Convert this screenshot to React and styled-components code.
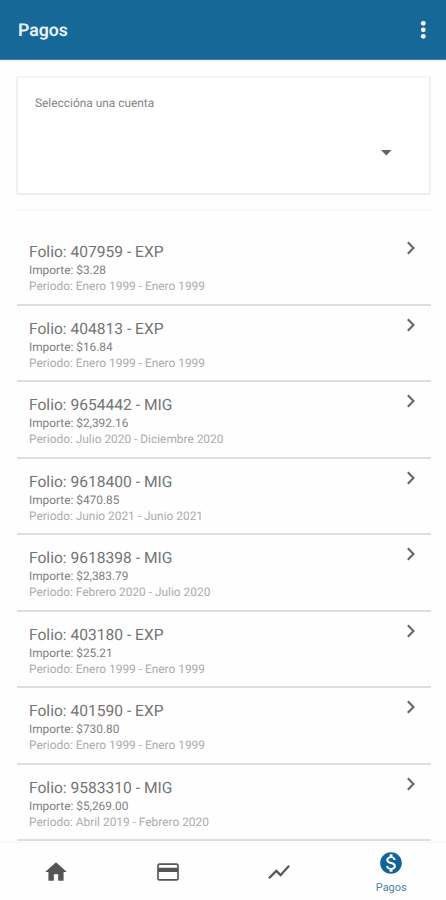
import React from "react";
import styled, { createGlobalStyle } from "styled-components";

const GlobalStyle = createGlobalStyle`
  *, *::before, *::after { box-sizing: border-box; }
  html, body { margin: 0; padding: 0; background: #fefefe; }
  body {
    font-family: Roboto, "Liberation Sans", sans-serif;
    text-rendering: geometricPrecision;
    overflow: hidden;
  }
`;

const Screen = styled.div`
  display: flex;
  flex-direction: column;
  width: 446px;
  height: 900px;
  overflow: hidden;
  background: #fefefe;
`;

const AppBar = styled.header`
  flex: none;
  display: flex;
  align-items: center;
  justify-content: space-between;
  height: 60px;
  padding: 1px 12px 0 18px;
  background: #166899;
  border-bottom: 1px solid #4c82a8;
  box-shadow: 0 1px 2px #dfe9f2;
`;

const Title = styled.h1`
  margin: 2px 0 0;
  font-size: 17.7px;
  line-height: 24px;
  font-weight: 600;
  color: #e6f3fb;
`;

const MenuButton = styled.button`
  display: flex;
  padding: 0;
  border: 0;
  background: none;
  color: #fff;
`;

const Content = styled.main`
  flex: 1;
  min-height: 0;
  overflow: hidden;
  padding: 16px 15px 0 16px;
`;

const AccountCard = styled.section`
  display: flex;
  flex-direction: column;
  height: 119px;
  padding: 16px 33px 0 17px;
  border: 2px solid #f1f1f1;
  border-top-color: #f6f6f6;
  border-bottom-color: #eeeeee;
  border-radius: 2px;
  background: #fff;
`;

const AccountLabel = styled.label`
  font-size: 11.9px;
  line-height: 18px;
  color: #848484;
`;

const SelectArrow = styled.span`
  align-self: flex-end;
  display: flex;
  margin-top: 38px;
  color: #626262;
`;

const List = styled.ul`
  list-style: none;
  margin: 15px 0 0 1px;
  padding: 18px 0 0;
  border-top: 1px solid #f5f5f5;
`;

const Row = styled.li`
  display: flex;
  justify-content: space-between;
  height: 76.55px;
  padding: 13px 14px 0 12px;
  border-bottom: 2px solid #dedede;
`;

const RowText = styled.div`
  display: flex;
  flex-direction: column;
  white-space: nowrap;
`;

const Folio = styled.span`
  font-size: 15.6px;
  line-height: 20px;
  color: #747474;
`;

const Amount = styled.span`
  font-size: 11.85px;
  line-height: 16px;
  color: #7e7e7e;
`;

const Period = styled.span`
  font-size: 11.9px;
  line-height: 16px;
  color: #acacac;
`;

const Chevron = styled.span`
  display: flex;
  align-self: flex-start;
  margin-top: -1px;
  color: #666;
`;

const BottomNav = styled.nav`
  flex: none;
  display: grid;
  grid-template-columns: repeat(4, 1fr);
  height: 58px;
  border-top: 1px solid #f6f6f6;
  background: #fefefe;
`;

const NavItem = styled.a`
  display: flex;
  flex-direction: column;
  align-items: center;
  padding-top: ${(p) => (p.$active ? "7px" : "16px")};
  padding-left: ${(p) => (p.$active ? "2px" : "1px")};
  color: ${(p) => (p.$active ? "#12639a" : "#555")};
`;

const NavLabel = styled.span`
  margin-top: 5px;
  font-size: 11px;
  line-height: 14px;
  color: #4c83a9;
`;

const PAYMENTS = [
  ["407959 - EXP", "$3.28", "Enero 1999 - Enero 1999"],
  ["404813 - EXP", "$16.84", "Enero 1999 - Enero 1999"],
  ["9654442 - MIG", "$2,392.16", "Julio 2020 - Diciembre 2020"],
  ["9618400 - MIG", "$470.85", "Junio 2021 - Junio 2021"],
  ["9618398 - MIG", "$2,383.79", "Febrero 2020 - Julio 2020"],
  ["403180 - EXP", "$25.21", "Enero 1999 - Enero 1999"],
  ["401590 - EXP", "$730.80", "Enero 1999 - Enero 1999"],
  ["9583310 - MIG", "$5,269.00", "Abril 2019 - Febrero 2020"],
];

const TABS = [
  { id: "home", d: "M10 20v-6h4v6h5v-8h3L12 3 2 12h3v8z" },
  {
    id: "cards",
    d: "M20 4H4c-1.11 0-1.99.89-1.99 2L2 18c0 1.11.89 2 2 2h16c1.11 0 2-.89 2-2V6c0-1.11-.89-2-2-2zm.5 14.5h-17V12h17v6.5zm0-10.5h-17V5.5h17v2.5z",
  },
  {
    id: "chart",
    d: "M3.5 18.49l6-6.01 4 4L22 6.92l-1.41-1.41-7.09 7.97-4-4L2 16.99z",
  },
  {
    id: "payments",
    label: "Pagos",
    d: "M12 2C6.48 2 2 6.48 2 12s4.48 10 10 10 10-4.48 10-10S17.52 2 12 2zm1.41 16.09V20h-2.67v-1.93c-1.71-.36-3.16-1.46-3.27-3.4h1.96c.1 1.05.82 1.87 2.65 1.87 1.96 0 2.4-.98 2.4-1.59 0-.83-.44-1.61-2.67-2.14-2.48-.6-4.18-1.62-4.18-3.67 0-1.72 1.39-2.84 3.11-3.21V4h2.67v1.95c1.86.45 2.79 1.86 2.85 3.39H14.3c-.05-1.11-.64-1.87-2.22-1.87-1.5 0-2.4.68-2.4 1.64 0 .84.65 1.39 2.67 1.91s4.18 1.39 4.18 3.91c-.01 1.83-1.38 2.83-3.12 3.16z",
  },
];

function Icon({ d, size }) {
  return (
    <svg width={size} height={size} viewBox="0 0 24 24" fill="currentColor" aria-hidden="true">
      <path d={d} />
    </svg>
  );
}

export default function App() {
  return (
    <Screen>
      <GlobalStyle />
      <AppBar>
        <Title>Pagos</Title>
        <MenuButton aria-label="Opciones">
          <svg width="22" height="22" viewBox="0 0 22 22" fill="currentColor">
            <circle cx="11.3" cy="4.3" r="2.4" />
            <circle cx="11.3" cy="10.8" r="2.4" />
            <circle cx="11.3" cy="17.3" r="2.4" />
          </svg>
        </MenuButton>
      </AppBar>
      <Content>
        <AccountCard>
          <AccountLabel>Seleccióna una cuenta</AccountLabel>
          <SelectArrow>
            <svg width="20" height="6" viewBox="0 0 20 6" fill="currentColor">
              <path d="M5 0h10.6L10.3 5.6z" />
            </svg>
          </SelectArrow>
        </AccountCard>
        <List>
          {PAYMENTS.map(([folio, amount, period]) => (
            <Row key={folio}>
              <RowText>
                <Folio>Folio: {folio}</Folio>
                <Amount>Importe: {amount}</Amount>
                <Period>Periodo: {period}</Period>
              </RowText>
              <Chevron>
                <svg width="12" height="14" viewBox="0 0 12 14" fill="none" stroke="currentColor" strokeWidth="2.1">
                  <path d="M2.8 1.2 8.5 7 2.8 12.8" />
                </svg>
              </Chevron>
            </Row>
          ))}
        </List>
      </Content>
      <BottomNav>
        {TABS.map((tab) => (
          <NavItem key={tab.id} $active={Boolean(tab.label)}>
            <Icon d={tab.d} size={26} />
            {tab.label && <NavLabel>{tab.label}</NavLabel>}
          </NavItem>
        ))}
      </BottomNav>
    </Screen>
  );
}
